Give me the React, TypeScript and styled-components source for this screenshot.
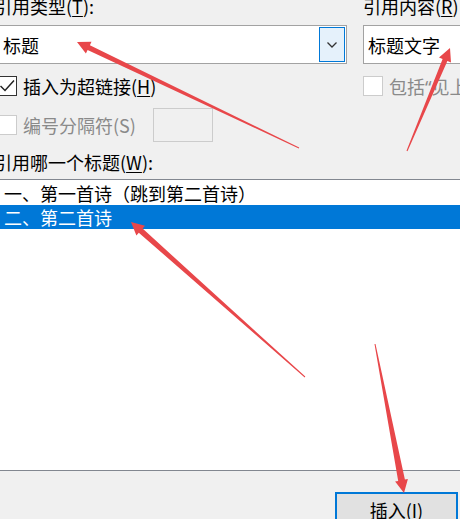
import React from 'react';
import styled, { createGlobalStyle } from 'styled-components';

const GlobalStyle = createGlobalStyle`
	html, body {
		margin: 0;
		padding: 0;
		background: #f0f0f0;
	}
	body {
		font-family: 'Noto Sans CJK SC', 'Noto Sans', 'Liberation Sans', sans-serif;
		font-size: 18px;
		color: #000;
	}
`;

const Page = styled.div`
	position: relative;
	width: 460px;
	height: 519px;
	overflow: hidden;
	background: #f0f0f0;
`;

const Dialog = styled.div`
	display: flex;
	flex-direction: column;
	width: 468px;
	margin-left: -8px;
	margin-top: -6px;
`;

const TopSection = styled.div`
	display: grid;
	grid-template-columns: 355px 1fr;
	column-gap: 16px;
`;

const Column = styled.div`
	display: flex;
	flex-direction: column;
	min-width: 0;
`;

const FieldLabel = styled.div<{ $indent?: number }>`
	height: 24px;
	line-height: 24px;
	padding-left: ${(p) => p.$indent ?? 0}px;
	white-space: nowrap;

	u {
		text-decoration: underline;
		text-underline-offset: 2px;
	}
`;

const Combo = styled.div<{ $inset: number; $bleed?: number }>`
	display: flex;
	align-items: center;
	box-sizing: border-box;
	height: 39px;
	margin-top: 7px;
	margin-right: ${(p) => -(p.$bleed ?? 0)}px;
	padding-left: ${(p) => p.$inset}px;
	padding-right: 1px;
	background: #fff;
	border: 1px solid #a2a2a2;
	line-height: 24px;
`;

const ComboText = styled.span`
	flex: 1;
	white-space: nowrap;
`;

const DropButton = styled.div`
	display: flex;
	align-items: center;
	justify-content: center;
	box-sizing: border-box;
	width: 26px;
	height: 35px;
	background: #e5f1fb;
	border: 1px solid #0078d7;
`;

const CheckRow = styled.div<{ $indent?: number; $height: number; $gap: number }>`
	display: flex;
	align-items: center;
	height: ${(p) => p.$height}px;
	margin-top: ${(p) => p.$gap}px;
	padding-left: ${(p) => p.$indent ?? 0}px;
	white-space: nowrap;
`;

const Box = styled.span<{ $disabled?: boolean }>`
	display: flex;
	align-items: center;
	justify-content: center;
	box-sizing: border-box;
	flex: none;
	width: 20px;
	height: 20px;
	background: #fff;
	border: 1px solid ${(p) => (p.$disabled ? '#cccccc' : '#333333')};
`;

const CheckText = styled.span<{ $disabled?: boolean }>`
	margin-left: 6px;
	line-height: 24px;
	color: ${(p) => (p.$disabled ? '#8a8a8a' : '#000')};

	u {
		text-underline-offset: 2px;
	}
`;

// the quote marks are narrow in the original UI font
const Quote = styled.span`
	font-family: 'Noto Sans', 'Liberation Sans', sans-serif;
`;

const SeparatorInput = styled.span`
	box-sizing: border-box;
	width: 60px;
	height: 34px;
	margin-left: 17px;
	border: 1px solid #cccccc;
	background: #f0f0f0;
`;

const HeadingLabel = styled(FieldLabel)`
	margin-top: 8px;
`;

const HeadingList = styled.ul`
	box-sizing: border-box;
	height: 292px;
	margin: 5px -24px 0 0;
	padding: 1px 0 0;
	list-style: none;
	background: #fff;
	border: 1px solid #828790;
`;

const HeadingItem = styled.li<{ $selected?: boolean }>`
	height: 24px;
	line-height: 24px;
	padding-left: 11px;
	white-space: nowrap;
	background: ${(p) => (p.$selected ? '#0078d7' : 'transparent')};
	color: ${(p) => (p.$selected ? '#fff' : '#000')};
`;

const Footer = styled.div`
	display: flex;
	justify-content: flex-end;
	padding: 21px 2px 0 0;
`;

const InsertButton = styled.button`
	box-sizing: border-box;
	width: 123px;
	height: 36px;
	padding: 0;
	font: inherit;
	line-height: 28px;
	color: #000;
	background: #e1e1e1;
	border: 2px solid #0078d7;
`;

const Overlay = styled.svg`
	position: absolute;
	inset: 0;
	pointer-events: none;
`;

type Arrow = { from: [number, number]; to: [number, number]; shaft: number };

const arrows: Arrow[] = [
	{ from: [299, 148], to: [77, 42], shaft: 2.6 },
	{ from: [407, 151], to: [450, 48], shaft: 2.6 },
	{ from: [305, 377], to: [131, 222], shaft: 2.8 },
	{ from: [375, 344], to: [404, 493], shaft: 3.4 },
];

// tapered annotation arrow: hairline at the tail, widening into a triangular head
const arrowPoints = ({ from, to, shaft }: Arrow) => {
	const [x1, y1] = from;
	const [x2, y2] = to;
	const len = Math.hypot(x2 - x1, y2 - y1);
	const ux = (x2 - x1) / len;
	const uy = (y2 - y1) / len;
	const nx = -uy;
	const ny = ux;
	const headLen = 13;
	const headHalf = 6.5;
	const bx = x2 - ux * headLen;
	const by = y2 - uy * headLen;
	const pts = [
		[x1 + nx * 0.5, y1 + ny * 0.5],
		[bx + nx * shaft, by + ny * shaft],
		[bx + nx * headHalf, by + ny * headHalf],
		[x2, y2],
		[bx - nx * headHalf, by - ny * headHalf],
		[bx - nx * shaft, by - ny * shaft],
		[x1 - nx * 0.5, y1 - ny * 0.5],
	];
	return pts.map(([x, y]) => `${x.toFixed(1)},${y.toFixed(1)}`).join(' ');
};

const Chevron = () => (
	<svg width="12" height="8" viewBox="0 0 12 8">
		<path d="M1.5 1.5 L6 6 L10.5 1.5" fill="none" stroke="#333" strokeWidth="1.3" />
	</svg>
);

const CheckMark = () => (
	<svg width="18" height="18" viewBox="0 0 18 18">
		<path d="M2.5 9 L7 13.5 L16 3.5" fill="none" stroke="#222" strokeWidth="1.5" />
	</svg>
);

const headings = ['一、第一首诗（跳到第二首诗）', '二、第二首诗'];

export default function App() {
	return (
		<>
			<GlobalStyle />
			<Page>
				<Dialog>
					<TopSection>
						<Column>
							<FieldLabel $indent={2}>
								引用类型(<u>T</u>):
							</FieldLabel>
							<Combo $inset={10}>
								<ComboText>标题</ComboText>
								<DropButton>
									<Chevron />
								</DropButton>
							</Combo>
							<CheckRow $indent={5} $height={20} $gap={12}>
								<Box>
									<CheckMark />
								</Box>
								<CheckText>
									插入为超链接(<u>H</u>)
								</CheckText>
							</CheckRow>
							<CheckRow $indent={5} $height={34} $gap={12}>
								<Box $disabled />
								<CheckText $disabled>编号分隔符(S)</CheckText>
								<SeparatorInput />
							</CheckRow>
						</Column>
						<Column>
							<FieldLabel>
								引用内容(<u>R</u>)
							</FieldLabel>
							<Combo $inset={4} $bleed={12}>
								<ComboText>标题文字</ComboText>
							</Combo>
							<CheckRow $height={20} $gap={12}>
								<Box $disabled />
								<CheckText $disabled>
									包括<Quote>“</Quote>见上方<Quote>”</Quote>/<Quote>“</Quote>见下方
									<Quote>”</Quote>
								</CheckText>
							</CheckRow>
						</Column>
					</TopSection>
					<HeadingLabel $indent={2}>
						引用哪一个标题(<u>W</u>):
					</HeadingLabel>
					<HeadingList>
						{headings.map((h, i) => (
							<HeadingItem key={h} $selected={i === 1}>
								{h}
							</HeadingItem>
						))}
					</HeadingList>
					<Footer>
						<InsertButton>插入(I)</InsertButton>
					</Footer>
				</Dialog>
				<Overlay width="460" height="519" viewBox="0 0 460 519">
					{arrows.map((a, i) => (
						<polygon key={i} points={arrowPoints(a)} fill="#e8474a" />
					))}
				</Overlay>
			</Page>
		</>
	);
}
